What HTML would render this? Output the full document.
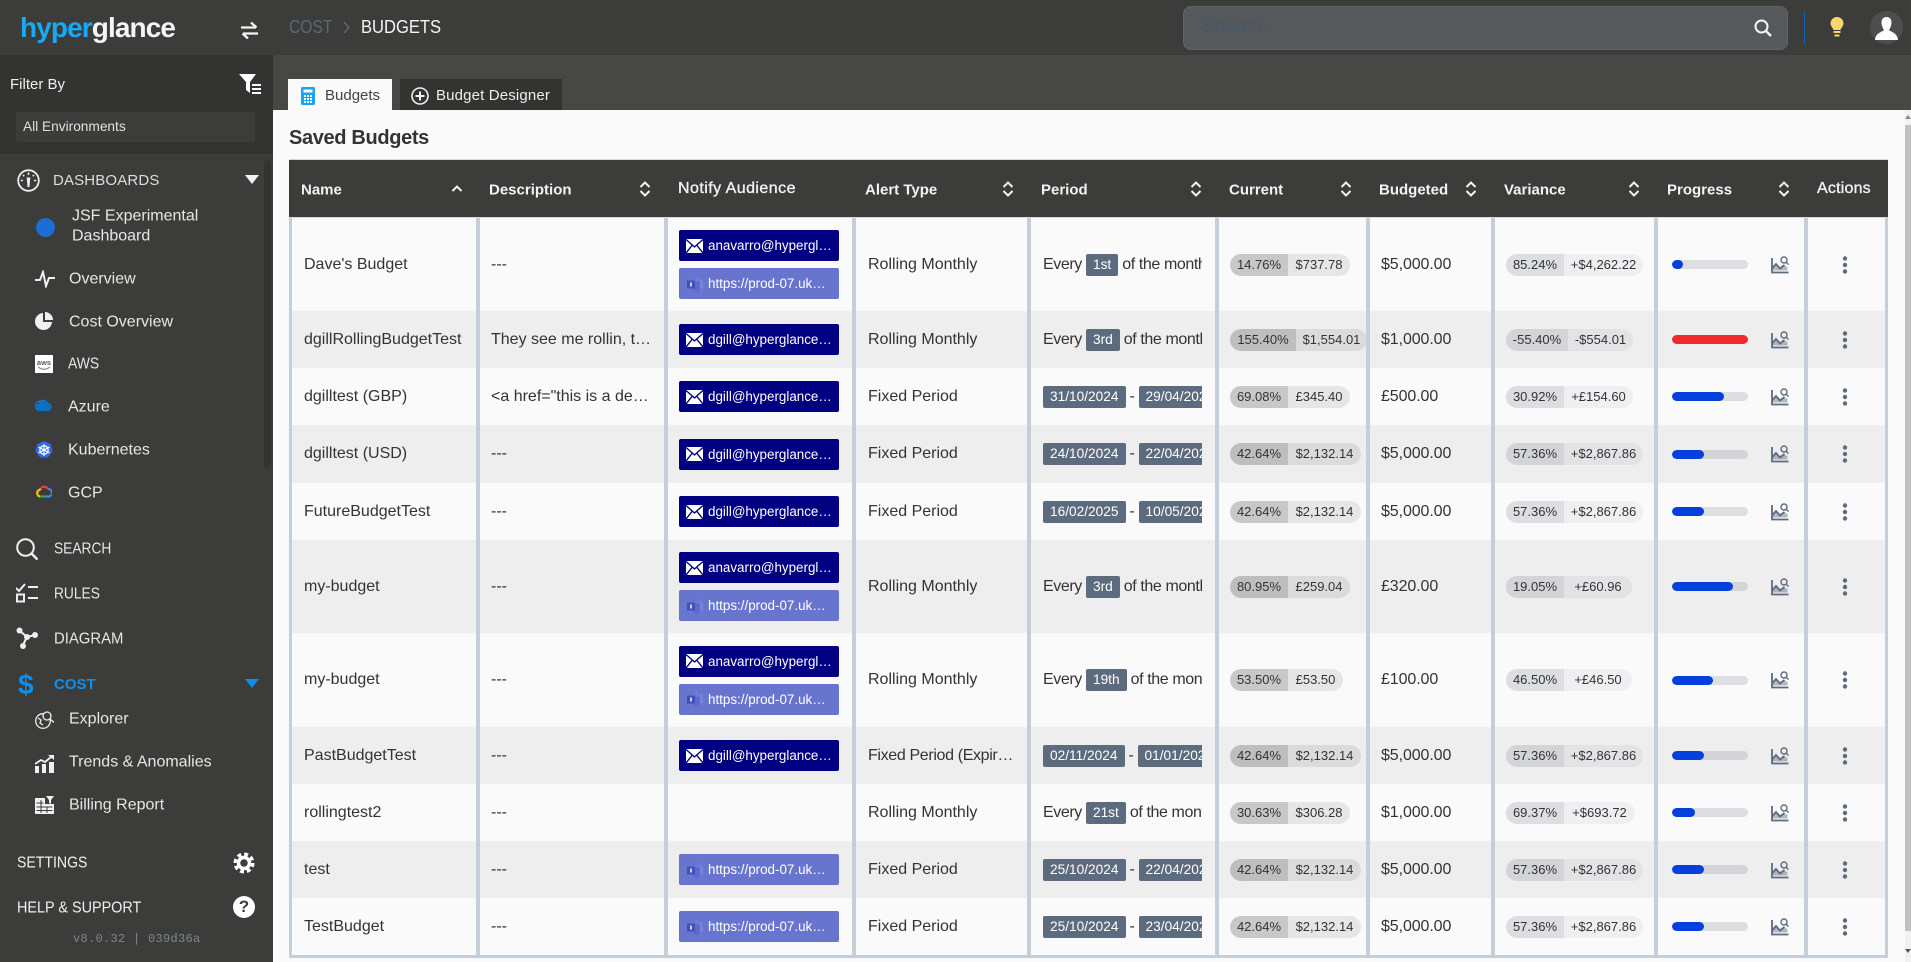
<!DOCTYPE html>
<html lang="en"><head><meta charset="utf-8"><title>Budgets</title>
<style>
*{box-sizing:border-box}
html,body{margin:0;padding:0;width:1911px;height:962px;overflow:hidden;background:#fafafa;font-family:"Liberation Sans",sans-serif;color:#333}
.t{position:absolute;white-space:nowrap;transform:translateY(-50%);line-height:1.2}
#side .t{margin-top:1px}
.nx{transform-origin:left center}
.a{position:absolute}
#side{position:absolute;left:0;top:0;width:273px;height:962px;background:#3c3c3a;color:#e6e6e6;font-size:16px}
#top{position:absolute;left:273px;top:0;width:1638px;height:55px;background:#3c3c3a}
#sub{position:absolute;left:273px;top:55px;width:1638px;height:55px;background:#474745}
table{position:absolute;left:289px;top:159px;width:1599px;border-collapse:separate;border-spacing:0;table-layout:fixed}
th{background:#3c3c3a;color:#f2f2f2;font-size:15px;font-weight:700;text-align:left;height:59px;padding:0;position:relative;border-top:1px solid #d8d8d8;border-bottom:1px solid #d8d8d8}
th span{position:absolute;top:50%;transform:translateY(-50%);white-space:nowrap;margin-top:1px}
th svg{position:absolute;top:50%;margin-top:-9px}
th span.h{font-weight:400;font-size:16px;-webkit-text-stroke:.35px #f2f2f2;margin-top:0}
td{border-left:4px solid #c5ced9;padding:0 0 0 11px;font-size:16px;white-space:nowrap;background:#fafafa;position:relative;vertical-align:middle}
td:nth-child(4),td:nth-child(5){padding-left:12px}
tr.o td{background:#eee}
td:first-child{border-left-width:3px;padding-left:12px}
td:last-child{border-right:3px solid #c5ced9}
td:nth-child(7){letter-spacing:-.1px}
tbody tr:last-child td{border-bottom:3px solid #c5ced9}
.n{display:flex;align-items:center;width:160px;height:31px;background:#000080;color:#fff;border-radius:2px;font-size:13.400px;padding-left:7px;margin:0}
.n svg{margin-right:5px;flex:none}
.n.m{background:#6875cf;margin-top:7px}
.p{width:159px;overflow:hidden;display:flex;align-items:center}
.b{background:#5d6b7e;color:#fff;font-size:13.700px;height:22px;line-height:22px;padding:0 7px;border-radius:2px;flex:none}
.p i{font-style:normal;flex:none}
.p i:first-child{letter-spacing:-.4px}
.p b.b{font-weight:400}
.p .x{letter-spacing:-.4px}
.c{display:inline-flex;height:22px;border-radius:11px;overflow:hidden;font-size:13px;line-height:22px;text-align:center;position:relative;vertical-align:middle}
.c b{font-weight:400;display:block;background:rgba(0,0,0,.2);flex:none}
.c u{text-decoration:none;display:block;background:rgba(0,0,0,.08);flex:none}
.v b{background:rgba(30,40,70,.13)}
.v u{background:rgba(30,40,70,.05)}
.g{position:absolute;left:14px;top:50%;margin-top:-4.5px;width:76px;height:9px;border-radius:5px;background:rgba(30,40,70,.13);overflow:hidden}
.g s{display:block;height:9px;background:#0440dd;border-radius:5px}
.ci{position:absolute;left:113px;top:50%;margin-top:-9px}
.d{position:absolute;left:28px;top:50%;margin-top:-9px}
</style></head>
<body>
<svg width="0" height="0" style="position:absolute">
<symbol id="s" viewBox="0 0 14 18"><path d="M2.5 7 7 2.5 11.500 7M2.500 11 7 15.500 11.500 11" fill="none" stroke="#f2f2f2" stroke-width="2"/></symbol>
<symbol id="mail" viewBox="0 0 17 14"><rect width="17" height="14" fill="#fff"/><path d="M0 .5 8.500 8 17 .5M0 14 6 6.500M17 14 11 6.500" fill="none" stroke="#000080" stroke-width="1.400"/></symbol>
<symbol id="tm" viewBox="0 0 17 16"><circle cx="11" cy="3" r="2.500" fill="#7078d8"/><circle cx="15" cy="4.500" r="1.500" fill="#7b83e0"/><path d="M7 6h7v6.500a3.500 3.500 0 0 1-7 0z" fill="#5f68d0"/><path d="M14 6h3v5a2 2 0 0 1-3 1.500z" fill="#7b83e0"/><rect x="1" y="4.500" width="8" height="8" fill="#464fb8"/><rect x="4" y="6.500" width="2" height="4" fill="#c9ccf0"/></symbol>
<symbol id="ch" viewBox="0 0 18 18"><path d="M1 2v14.500h16.500" fill="none" stroke="#5d6b7e" stroke-width="1.800"/><path d="M1.500 12 5 8l4 4.500 4-3 3.500 1.500v3.500H1.500z" fill="#5d6b7e" opacity=".45"/><path d="M1.500 12 5 8l4 4.500 4.500-3.500" fill="none" stroke="#5d6b7e" stroke-width="1.900"/><circle cx="13" cy="4" r="3" fill="none" stroke="#5d6b7e" stroke-width="1.400"/><path d="m15.200 6.200 2.300 2.400" stroke="#5d6b7e" stroke-width="1.400"/></symbol>
<symbol id="dt" viewBox="0 0 18 18"><circle cx="9" cy="2.500" r="2.200" fill="#5d6b7e"/><circle cx="9" cy="9" r="2.200" fill="#5d6b7e"/><circle cx="9" cy="15.500" r="2.200" fill="#5d6b7e"/></symbol>
</svg>

<div id="top"></div><div id="sub"></div>

<div id="side">
 <div class="a" style="left:0;top:55px;width:273px;height:99px;background:#333331"></div>
 <div class="t" style="left:20px;top:27px;font-size:28px;font-weight:700;letter-spacing:-.900px"><span style="color:#19a9f2">hyper</span><span style="color:#f4f4f4">glance</span></div>
 <svg class="a" style="left:241px;top:21px" width="17" height="18" viewBox="0 0 17 18" fill="none" stroke="#f4f4f4" stroke-width="2.300"><path d="M0 6.500h15M10 1.500 15.500 6.500M17 12.500H2M7 17.500 1.500 12.500"/></svg>
 <div class="t" style="left:10px;top:84px;font-size:15px;color:#f0f0f0">Filter By</div>
 <svg class="a" style="left:239px;top:74px" width="23" height="20" viewBox="0 0 23 20"><path d="M0 0h17l-6 8v11l-4-3V8z" fill="#fff"/><path d="M13 10h9v2h-9zM13 14h9v2h-9zM13 18h9v2h-9z" fill="#fff"/></svg>
 <div class="a" style="left:16px;top:112px;width:239px;height:30px;background:#3c3c3a;border-radius:2px"></div>
 <div class="t" style="left:23px;top:127px;font-size:13.700px;color:#e0e0e0;margin-top:0">All Environments</div>
 <div class="a" style="left:264px;top:160px;width:7px;height:308px;background:#333331;border-radius:4px"></div>

 <svg class="a" style="left:17px;top:169px" width="23" height="23" viewBox="0 0 23 23" fill="none" stroke="#eee"><circle cx="11.500" cy="11.500" r="10.300" stroke-width="1.800"/><path d="M10.500 18h2l.8-9.500h-3.600z" fill="#eee" stroke="none"/><path d="M11.500 3.500v2.500M6 6l1.200 1.200M17 6l-1.200 1.200M3.800 11.500h2.200M19.200 11.500H17" stroke-width="1.500"/></svg>
 <div class="t" style="left:53px;top:180px;font-size:15px;color:#ddd;letter-spacing:.15px">DASHBOARDS</div>
 <svg class="a" style="left:245px;top:175px" width="14" height="10" viewBox="0 0 14 10"><path d="M0 0h14L7 9z" fill="#f2f2f2"/></svg>
 <div class="a" style="left:36px;top:218px;width:19px;height:19px;border-radius:50%;background:#1c6ed2"></div>
 <div class="t" style="left:72px;top:215px">JSF Experimental</div>
 <div class="t" style="left:72px;top:235px">Dashboard</div>
 <svg class="a" style="left:35px;top:270px" width="20" height="18" viewBox="0 0 20 18" fill="none" stroke="#eee" stroke-width="2"><path d="M0 10h5l3-8 3 14 3-8h6"/></svg>
 <div class="t" style="left:69px;top:278px">Overview</div>
 <svg class="a" style="left:35px;top:312px" width="18" height="18" viewBox="0 0 18 18"><path d="M8 1v9h9a8.500 8.500 0 1 1-9-9z" fill="#f0f0f0"/><path d="M10 0a8 8 0 0 1 8 8h-8z" fill="#f0f0f0"/></svg>
 <div class="t" style="left:69px;top:321px">Cost Overview</div>
 <svg class="a" style="left:35px;top:355px" width="18" height="18" viewBox="0 0 18 18"><rect width="18" height="18" fill="#fff"/><text x="9" y="10" font-size="7.500" font-weight="700" text-anchor="middle" fill="#555e6b" font-family="Liberation Sans">aws</text><path d="M3 12c4 3 8 3 12 0" fill="none" stroke="#8a8f98" stroke-width="1.200"/></svg>
 <div class="t nx" style="left:68px;top:363px;transform:translateY(-50%) scaleX(.87)">AWS</div>
 <svg class="a" style="left:35px;top:399px" width="18" height="13" viewBox="0 0 18 13"><path d="M4 12a3.500 3.500 0 0 1-.500-7 5 5 0 0 1 9.500-1.500A4.500 4.500 0 0 1 14 12z" fill="#0d6fc2"/><path d="M1 7a4 4 0 0 1 4-5h3" fill="none" stroke="#1a7fd6"/></svg>
 <div class="t" style="left:68px;top:406px">Azure</div>
 <svg class="a" style="left:35px;top:441px" width="18" height="18" viewBox="0 0 18 18"><path d="M9 0l6.800 3.300 1.700 7.300-4.700 5.900H5.200L.5 10.600 2.200 3.300z" fill="#326ce5"/><circle cx="9" cy="9" r="4.200" fill="none" stroke="#fff" stroke-width="1.300"/><path d="M9 3v12M3.500 6l11 6M14.500 6l-11 6" stroke="#fff" stroke-width="1"/></svg>
 <div class="t" style="left:68px;top:449px">Kubernetes</div>
 <svg class="a" style="left:36px;top:485px" width="16" height="13" viewBox="0 0 16 13" fill="none" stroke-width="2.200"><path d="M5 3a4.500 4.500 0 0 1 7 1" stroke="#ea4335"/><path d="M12 4a3.800 3.800 0 0 1 1 7.500H9" stroke="#4285f4"/><path d="M9 11.500H4" stroke="#34a853"/><path d="M4 11.500A3.500 3.500 0 0 1 3 5l2-1" stroke="#fbbc05"/></svg>
 <div class="t" style="left:68px;top:492px">GCP</div>

 <svg class="a" style="left:16px;top:538px" width="22" height="22" viewBox="0 0 22 22" fill="none" stroke="#eee" stroke-width="2"><circle cx="9.500" cy="9.500" r="8.300"/><path d="m15.500 15.500 6 6" stroke-width="2.500"/></svg>
 <div class="t nx" style="left:54px;top:548px;transform:translateY(-50%) scaleX(.86)">SEARCH</div>
 <svg class="a" style="left:16px;top:583px" width="22" height="20" viewBox="0 0 22 20" fill="none" stroke="#eee" stroke-width="2"><path d="M0 5l3 3 6-7M12 4h10M12 15h10"/><rect x="1" y="11.500" width="7" height="7"/></svg>
 <div class="t nx" style="left:54px;top:593px;transform:translateY(-50%) scaleX(.86)">RULES</div>
 <svg class="a" style="left:16px;top:627px" width="22" height="22" viewBox="0 0 22 22" fill="#eee" stroke="#eee" stroke-width="2"><path d="M4 4l7 6 8-2M11 10l-4 8" fill="none"/><circle cx="3.500" cy="3.500" r="2"/><circle cx="19" cy="8" r="2"/><circle cx="7" cy="19" r="2"/><circle cx="11" cy="10" r="2"/></svg>
 <div class="t nx" style="left:54px;top:638px;transform:translateY(-50%) scaleX(.93)">DIAGRAM</div>
 <div class="t" style="left:18px;top:684px;font-size:28px;font-weight:700;color:#0d8ff0">$</div>
 <div class="t" style="left:54px;top:684px;font-size:15px;font-weight:700;color:#0d8ff0">COST</div>
 <svg class="a" style="left:245px;top:679px" width="14" height="10" viewBox="0 0 14 10"><path d="M0 0h14L7 9z" fill="#0d8ff0"/></svg>
 <svg class="a" style="left:35px;top:710px" width="19" height="19" viewBox="0 0 19 19" fill="none" stroke="#eee" stroke-width="1.300"><circle cx="8" cy="11" r="7.300"/><circle cx="12" cy="6" r="4" fill="#3c3c3a"/><path d="m15 9 4 3.500M3 8l3 2-1 3 3 2" /></svg>
 <div class="t" style="left:69px;top:718px">Explorer</div>
 <svg class="a" style="left:35px;top:755px" width="19" height="18" viewBox="0 0 19 18" fill="#f0f0f0"><rect y="11" width="4" height="7"/><rect x="7" y="9" width="4" height="9"/><rect x="14" y="7" width="5" height="11"/><path d="M0 9l6-4 4 2 6-5" fill="none" stroke="#f0f0f0" stroke-width="1.800"/><path d="M13 0h6v5z"/></svg>
 <div class="t" style="left:69px;top:761px">Trends &amp; Anomalies</div>
 <svg class="a" style="left:35px;top:796px" width="19" height="18" viewBox="0 0 19 18" fill="#f0f0f0"><path d="M0 2h10v6h9v10H0z"/><path d="M1.500 7h7M1.500 11h16M1.500 14.500h16M6 4v13M12 11v6" stroke="#3c3c3a"/><path d="M11 0h8l-3 4v4l-2-1V4z"/></svg>
 <div class="t" style="left:69px;top:804px">Billing Report</div>
 <div class="t nx" style="left:17px;top:862px;color:#f0f0f0;transform:translateY(-50%) scaleX(.88)">SETTINGS</div>
 <svg class="a" style="left:233px;top:852px" width="22" height="22" viewBox="0 0 22 22" fill="none" stroke="#fff"><circle cx="11" cy="11" r="5.500" stroke-width="3.500"/><circle cx="11" cy="11" r="8.800" stroke-width="3.500" stroke-dasharray="3.900 3"/></svg>
 <div class="t nx" style="left:17px;top:907px;color:#f0f0f0;transform:translateY(-50%) scaleX(.9)">HELP &amp; SUPPORT</div>
 <div class="a" style="left:233px;top:896px;width:22px;height:22px;border-radius:50%;background:#fff;color:#3c3c3a;font:700 17px/22px 'Liberation Sans',sans-serif;text-align:center">?</div>
 <div class="t" style="left:73px;top:938px;font:12px 'Liberation Mono',monospace;color:#7b8794;line-height:1.200;letter-spacing:.300px">v8.0.32 | 039d36a</div>
</div>

<div class="t nx" style="left:289px;top:28px;font-size:18px;color:#5c6878;transform:translateY(-50%) scaleX(.87)">COST</div>
<svg class="a" style="left:342px;top:21px" width="9" height="13" viewBox="0 0 9 13" fill="none" stroke="#5c6878" stroke-width="1.500"><path d="M2 1l5 5.500L2 12"/></svg>
<div class="t nx" style="left:361px;top:28px;font-size:18px;color:#f4f4f4;transform:translateY(-50%) scaleX(.92)">BUDGETS</div>
<div class="a" style="left:1183px;top:6px;width:605px;height:44px;background:#55595c;border:1px solid #5f6468;border-radius:8px"></div>
<div class="t" style="left:1202px;top:28px;font-size:19px;color:#4a5668">Search...</div>
<svg class="a" style="left:1754px;top:19px" width="18" height="18" viewBox="0 0 18 18" fill="none" stroke="#f4f4f4" stroke-width="2"><circle cx="7.500" cy="7.500" r="6"/><path d="m12 12 5 5" stroke-width="2.400"/></svg>
<div class="a" style="left:1804px;top:11px;width:1px;height:33px;background:#0b66b8"></div>
<svg class="a" style="left:1830px;top:17px" width="14" height="20" viewBox="0 0 14 20" fill="#fcd56e"><path d="M7 0a6.500 6.500 0 0 1 6.500 6.500C13.500 9 11 11 10.500 13h-7C3 11 .5 9 .5 6.500A6.500 6.500 0 0 1 7 0z"/><rect x="3.500" y="14" width="7" height="2"/><rect x="4.500" y="17.500" width="5" height="2"/></svg>
<div class="a" style="left:1870px;top:11px;width:33px;height:33px;border-radius:50%;background:#4e4e4c"></div>
<svg class="a" style="left:1875px;top:17px" width="23" height="23" viewBox="0 0 23 23" fill="#fff"><path d="M11.500 0c3.500 0 5 2.500 5 5.500s-1.500 6-2.500 7.500c2 2 8.500 3 9 10H0c.5-7 7-8 9-10-1-1.500-2.500-4.500-2.500-7.500s1.500-5.500 5-5.500z"/></svg>

<div class="a" style="left:273px;top:110px;width:1638px;height:852px;background:#fafafa"></div>
<div class="a" style="left:288px;top:79px;width:104px;height:31px;background:#fafafa"></div>
<svg class="a" style="left:301px;top:87px" width="14" height="18" viewBox="0 0 14 18"><rect width="14" height="18" rx="1.500" fill="#1aa3f2"/><rect x="2.500" y="2.500" width="9" height="3" fill="#fff"/><path d="M3 8h2v2H3zM6 8h2v2H6zM9 8h2v2H9zM3 11h2v2H3zM6 11h2v2H6zM9 11h2v2H9zM3 14h2v2H3zM6 14h2v2H6zM9 14h2v2H9z" fill="#fff"/></svg>
<div class="t" style="left:325px;top:96px;font-size:15px;color:#444">Budgets</div>
<div class="a" style="left:400px;top:79px;width:162px;height:31px;background:#333331"></div>
<svg class="a" style="left:411px;top:87px" width="18" height="18" viewBox="0 0 18 18" fill="none" stroke="#f0f0f0" stroke-width="1.600"><circle cx="9" cy="9" r="8"/><path d="M9 4.500v9M4.500 9h9" stroke-width="2"/></svg>
<div class="t" style="left:436px;top:96px;font-size:15px;color:#eee;letter-spacing:.15px">Budget Designer</div>
<div class="t" style="left:289px;top:138px;font-size:20px;font-weight:700;color:#333;letter-spacing:-.350px">Saved Budgets</div>

<table>
<colgroup><col style="width:187px"><col style="width:188px"><col style="width:188px"><col style="width:175px"><col style="width:188px"><col style="width:151px"><col style="width:125px"><col style="width:163px"><col style="width:150px"><col style="width:84px"></colgroup>
<thead><tr>
<th><span style="left:12px">Name</span><svg style="left:161px" width="14" height="18"><path d="M2.500 11 7 6.500 11.500 11" fill="none" stroke="#f2f2f2" stroke-width="2"/></svg></th>
<th><span style="left:13px">Description</span><svg style="left:162px" width="14" height="18"><use href="#s"/></svg></th>
<th><span class="h" style="left:14px;letter-spacing:.45px">Notify Audience</span></th>
<th><span style="left:13px">Alert Type</span><svg style="left:149px" width="14" height="18"><use href="#s"/></svg></th>
<th><span style="left:14px">Period</span><svg style="left:162px" width="14" height="18"><use href="#s"/></svg></th>
<th><span style="left:14px">Current</span><svg style="left:124px" width="14" height="18"><use href="#s"/></svg></th>
<th><span style="left:13px">Budgeted</span><svg style="left:98px" width="14" height="18"><use href="#s"/></svg></th>
<th><span style="left:13px">Variance</span><svg style="left:136px" width="14" height="18"><use href="#s"/></svg></th>
<th><span style="left:13px">Progress</span><svg style="left:123px" width="14" height="18"><use href="#s"/></svg></th>
<th><span class="h" style="left:13px;letter-spacing:.2px">Actions</span></th>
</tr></thead>
<tbody>
<tr style="height:93px"><td>Dave's Budget</td><td>---</td><td><div class="n"><svg width="17" height="14"><use href="#mail"/></svg>anavarro@hypergl…</div><div class="n m"><svg width="17" height="16"><use href="#tm"/></svg>https://prod-07.uk…</div></td><td>Rolling Monthly</td><td><div class="p"><i>Every&nbsp;</i><span class="b">1st</span><i class="x">&nbsp;of the month</i></div></td><td><span class="c"><b style="width:58px">14.76%</b><u style="width:62px">$737.78</u></span></td><td>$5,000.00</td><td><span class="c v"><b style="width:58px">85.24%</b><u style="width:79px">+$4,262.22</u></span></td><td><div class="g"><s style="width:11px"></s></div><svg class="ci" width="18" height="18"><use href="#ch"/></svg></td><td><svg class="d" width="18" height="18"><use href="#dt"/></svg></td></tr>
<tr class="o" style="height:57px"><td>dgillRollingBudgetTest</td><td>They see me rollin, t…</td><td><div class="n"><svg width="17" height="14"><use href="#mail"/></svg>dgill@hyperglance…</div></td><td>Rolling Monthly</td><td><div class="p"><i>Every&nbsp;</i><span class="b">3rd</span><i class="x">&nbsp;of the month</i></div></td><td><span class="c"><b style="width:66px">155.40%</b><u style="width:71px">$1,554.01</u></span></td><td>$1,000.00</td><td><span class="c v"><b style="width:62px">-55.40%</b><u style="width:65px">-$554.01</u></span></td><td><div class="g"><s style="width:76px;background:#ee2a2a"></s></div><svg class="ci" width="18" height="18"><use href="#ch"/></svg></td><td><svg class="d" width="18" height="18"><use href="#dt"/></svg></td></tr>
<tr style="height:57px"><td>dgilltest (GBP)</td><td>&lt;a href="this is a de…</td><td><div class="n"><svg width="17" height="14"><use href="#mail"/></svg>dgill@hyperglance…</div></td><td>Fixed Period</td><td><div class="p"><span class="b">31/10/2024</span><i class="x">&nbsp;-&nbsp;</i><span class="b">29/04/2025</span></div></td><td><span class="c"><b style="width:58px">69.08%</b><u style="width:62px">£345.40</u></span></td><td>£500.00</td><td><span class="c v"><b style="width:58px">30.92%</b><u style="width:69px">+£154.60</u></span></td><td><div class="g"><s style="width:52px"></s></div><svg class="ci" width="18" height="18"><use href="#ch"/></svg></td><td><svg class="d" width="18" height="18"><use href="#dt"/></svg></td></tr>
<tr class="o" style="height:58px"><td>dgilltest (USD)</td><td>---</td><td><div class="n"><svg width="17" height="14"><use href="#mail"/></svg>dgill@hyperglance…</div></td><td>Fixed Period</td><td><div class="p"><span class="b">24/10/2024</span><i class="x">&nbsp;-&nbsp;</i><span class="b">22/04/2025</span></div></td><td><span class="c"><b style="width:58px">42.64%</b><u style="width:73px">$2,132.14</u></span></td><td>$5,000.00</td><td><span class="c v"><b style="width:58px">57.36%</b><u style="width:79px">+$2,867.86</u></span></td><td><div class="g"><s style="width:32px"></s></div><svg class="ci" width="18" height="18"><use href="#ch"/></svg></td><td><svg class="d" width="18" height="18"><use href="#dt"/></svg></td></tr>
<tr style="height:57px"><td>FutureBudgetTest</td><td>---</td><td><div class="n"><svg width="17" height="14"><use href="#mail"/></svg>dgill@hyperglance…</div></td><td>Fixed Period</td><td><div class="p"><span class="b">16/02/2025</span><i class="x">&nbsp;-&nbsp;</i><span class="b">10/05/2025</span></div></td><td><span class="c"><b style="width:58px">42.64%</b><u style="width:73px">$2,132.14</u></span></td><td>$5,000.00</td><td><span class="c v"><b style="width:58px">57.36%</b><u style="width:79px">+$2,867.86</u></span></td><td><div class="g"><s style="width:32px"></s></div><svg class="ci" width="18" height="18"><use href="#ch"/></svg></td><td><svg class="d" width="18" height="18"><use href="#dt"/></svg></td></tr>
<tr class="o" style="height:93px"><td>my-budget</td><td>---</td><td><div class="n"><svg width="17" height="14"><use href="#mail"/></svg>anavarro@hypergl…</div><div class="n m"><svg width="17" height="16"><use href="#tm"/></svg>https://prod-07.uk…</div></td><td>Rolling Monthly</td><td><div class="p"><i>Every&nbsp;</i><span class="b">3rd</span><i class="x">&nbsp;of the month</i></div></td><td><span class="c"><b style="width:58px">80.95%</b><u style="width:62px">£259.04</u></span></td><td>£320.00</td><td><span class="c v"><b style="width:58px">19.05%</b><u style="width:68px">+£60.96</u></span></td><td><div class="g"><s style="width:61px"></s></div><svg class="ci" width="18" height="18"><use href="#ch"/></svg></td><td><svg class="d" width="18" height="18"><use href="#dt"/></svg></td></tr>
<tr style="height:94px"><td>my-budget</td><td>---</td><td><div class="n"><svg width="17" height="14"><use href="#mail"/></svg>anavarro@hypergl…</div><div class="n m"><svg width="17" height="16"><use href="#tm"/></svg>https://prod-07.uk…</div></td><td>Rolling Monthly</td><td><div class="p"><i>Every&nbsp;</i><span class="b">19th</span><i class="x">&nbsp;of the month</i></div></td><td><span class="c"><b style="width:58px">53.50%</b><u style="width:55px">£53.50</u></span></td><td>£100.00</td><td><span class="c v"><b style="width:58px">46.50%</b><u style="width:68px">+£46.50</u></span></td><td><div class="g"><s style="width:41px"></s></div><svg class="ci" width="18" height="18"><use href="#ch"/></svg></td><td><svg class="d" width="18" height="18"><use href="#dt"/></svg></td></tr>
<tr class="o" style="height:57px"><td>PastBudgetTest</td><td>---</td><td><div class="n"><svg width="17" height="14"><use href="#mail"/></svg>dgill@hyperglance…</div></td><td style="letter-spacing:-.35px">Fixed Period (Expir…</td><td><div class="p"><span class="b">02/11/2024</span><i class="x">&nbsp;-&nbsp;</i><span class="b">01/01/2025</span></div></td><td><span class="c"><b style="width:58px">42.64%</b><u style="width:73px">$2,132.14</u></span></td><td>$5,000.00</td><td><span class="c v"><b style="width:58px">57.36%</b><u style="width:79px">+$2,867.86</u></span></td><td><div class="g"><s style="width:32px"></s></div><svg class="ci" width="18" height="18"><use href="#ch"/></svg></td><td><svg class="d" width="18" height="18"><use href="#dt"/></svg></td></tr>
<tr style="height:57px"><td>rollingtest2</td><td>---</td><td></td><td>Rolling Monthly</td><td><div class="p"><i>Every&nbsp;</i><span class="b">21st</span><i class="x">&nbsp;of the month</i></div></td><td><span class="c"><b style="width:58px">30.63%</b><u style="width:62px">$306.28</u></span></td><td>$1,000.00</td><td><span class="c v"><b style="width:58px">69.37%</b><u style="width:71px">+$693.72</u></span></td><td><div class="g"><s style="width:23px"></s></div><svg class="ci" width="18" height="18"><use href="#ch"/></svg></td><td><svg class="d" width="18" height="18"><use href="#dt"/></svg></td></tr>
<tr class="o" style="height:57px"><td>test</td><td>---</td><td><div class="n m" style="margin:0"><svg width="17" height="16"><use href="#tm"/></svg>https://prod-07.uk…</div></td><td>Fixed Period</td><td><div class="p"><span class="b">25/10/2024</span><i class="x">&nbsp;-&nbsp;</i><span class="b">22/04/2025</span></div></td><td><span class="c"><b style="width:58px">42.64%</b><u style="width:73px">$2,132.14</u></span></td><td>$5,000.00</td><td><span class="c v"><b style="width:58px">57.36%</b><u style="width:79px">+$2,867.86</u></span></td><td><div class="g"><s style="width:32px"></s></div><svg class="ci" width="18" height="18"><use href="#ch"/></svg></td><td><svg class="d" width="18" height="18"><use href="#dt"/></svg></td></tr>
<tr style="height:60px"><td>TestBudget</td><td>---</td><td><div class="n m" style="margin:0"><svg width="17" height="16"><use href="#tm"/></svg>https://prod-07.uk…</div></td><td>Fixed Period</td><td><div class="p"><span class="b">25/10/2024</span><i class="x">&nbsp;-&nbsp;</i><span class="b">23/04/2025</span></div></td><td><span class="c"><b style="width:58px">42.64%</b><u style="width:73px">$2,132.14</u></span></td><td>$5,000.00</td><td><span class="c v"><b style="width:58px">57.36%</b><u style="width:79px">+$2,867.86</u></span></td><td><div class="g"><s style="width:32px"></s></div><svg class="ci" width="18" height="18"><use href="#ch"/></svg></td><td><svg class="d" width="18" height="18"><use href="#dt"/></svg></td></tr>
</tbody></table>

<div class="a" style="left:1905px;top:110px;width:6px;height:852px;background:#f1f1f1"></div>
<div class="a" style="left:1905px;top:125px;width:6px;height:806px;background:#c1c1c1"></div>
<svg class="a" style="left:1905px;top:114px" width="6" height="6"><path d="M3 1 6 5H0z" fill="#888"/></svg>
<svg class="a" style="left:1905px;top:948px" width="6" height="6"><path d="M0 1h6L3 5z" fill="#555"/></svg>
</body></html>
